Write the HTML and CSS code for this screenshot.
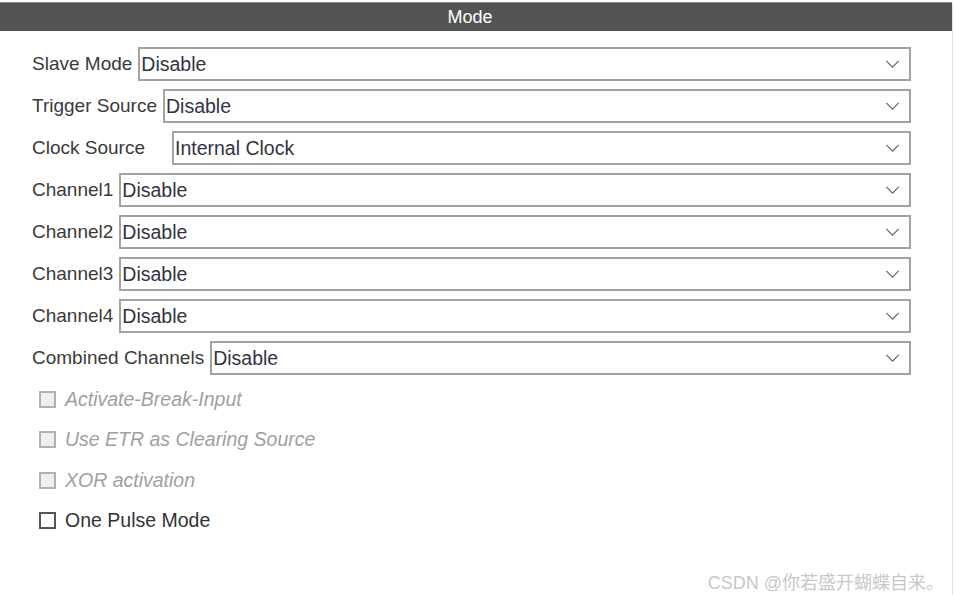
FILE: index.html
```html
<!DOCTYPE html>
<html>
<head>
<meta charset="utf-8">
<link rel="stylesheet" href="styles.css">
</head>
<body>
<div class="panel">
  <div class="header">Mode</div>
  <div class="form">
    <div class="row"><span class="label">Slave Mode</span><div class="select"><span>Disable</span><svg class="chev" viewBox="0 0 16 9"><path d="M1 1 L8 8 L15 1" /></svg></div></div>
    <div class="row"><span class="label">Trigger Source</span><div class="select"><span>Disable</span><svg class="chev" viewBox="0 0 16 9"><path d="M1 1 L8 8 L15 1" /></svg></div></div>
    <div class="row wide"><span class="label">Clock Source</span><div class="select"><span>Internal Clock</span><svg class="chev" viewBox="0 0 16 9"><path d="M1 1 L8 8 L15 1" /></svg></div></div>
    <div class="row"><span class="label">Channel1</span><div class="select"><span>Disable</span><svg class="chev" viewBox="0 0 16 9"><path d="M1 1 L8 8 L15 1" /></svg></div></div>
    <div class="row"><span class="label">Channel2</span><div class="select"><span>Disable</span><svg class="chev" viewBox="0 0 16 9"><path d="M1 1 L8 8 L15 1" /></svg></div></div>
    <div class="row"><span class="label">Channel3</span><div class="select"><span>Disable</span><svg class="chev" viewBox="0 0 16 9"><path d="M1 1 L8 8 L15 1" /></svg></div></div>
    <div class="row"><span class="label">Channel4</span><div class="select"><span>Disable</span><svg class="chev" viewBox="0 0 16 9"><path d="M1 1 L8 8 L15 1" /></svg></div></div>
    <div class="row"><span class="label">Combined Channels</span><div class="select"><span>Disable</span><svg class="chev" viewBox="0 0 16 9"><path d="M1 1 L8 8 L15 1" /></svg></div></div>
    <div class="checks">
      <div class="check disabled"><span class="box"></span><span>Activate-Break-Input</span></div>
      <div class="check disabled"><span class="box"></span><span>Use ETR as Clearing Source</span></div>
      <div class="check disabled"><span class="box"></span><span>XOR activation</span></div>
      <div class="check"><span class="box"></span><span>One Pulse Mode</span></div>
    </div>
  </div>
  <div class="watermark">CSDN @你若盛开蝴蝶自来。</div>
</div>
</body>
</html>
```
FILE: styles.css
```css
html, body {
  margin: 0;
  padding: 0;
  background: #ffffff;
}
body {
  font-family: "Liberation Sans", Arial, "Noto Sans CJK SC", sans-serif;
  color: #333333;
}
.panel {
  position: relative;
  width: 952px;
  height: 595px;
  border-right: 1px solid #e6e6e6;
}
.header {
  margin-top: 2px;
  height: 28px;
  border-top: 1px solid #8a8a8a;
  background: #525453;
  color: #ffffff;
  font-size: 18px;
  line-height: 28px;
  text-align: center;
  padding-right: 12px;
}
.form {
  padding: 16px 41px 0 32px;
  display: flex;
  flex-direction: column;
  gap: 8px;
}
.row {
  display: flex;
  align-items: center;
  gap: 6px;
  height: 34px;
}
.row.wide {
  gap: 27px;
}
.label {
  font-size: 19px;
  color: #3a3a3a;
  white-space: nowrap;
}
.select {
  flex: 1;
  height: 34px;
  box-sizing: border-box;
  border: 2px solid #a3a3a3;
  display: flex;
  align-items: center;
  justify-content: space-between;
  padding: 0 9px 0 1px;
  font-size: 19.5px;
  color: #333344;
}
.chev {
  width: 15px;
  height: 8px;
  fill: none;
  stroke: #6e6e6e;
  stroke-width: 1.5;
}
.checks {
  display: flex;
  flex-direction: column;
  margin-top: -4px;
}
.check {
  display: flex;
  align-items: center;
  height: 40.5px;
  gap: 9px;
  padding-left: 7px;
  font-size: 19.5px;
  color: #333333;
}
.box {
  width: 17px;
  height: 17px;
  box-sizing: border-box;
  border: 2px solid #555555;
  background: #ffffff;
}
.check.disabled {
  color: #a0a0a0;
  font-style: italic;
}
.check.disabled .box {
  border-color: #b0b0b0;
  background: #efefef;
}
.watermark {
  position: absolute;
  right: 8px;
  top: 566px;
  font-family: "Liberation Sans", "Noto Sans CJK SC", sans-serif;
  font-size: 18px;
  color: #c8c8c8;
  white-space: nowrap;
}
```
